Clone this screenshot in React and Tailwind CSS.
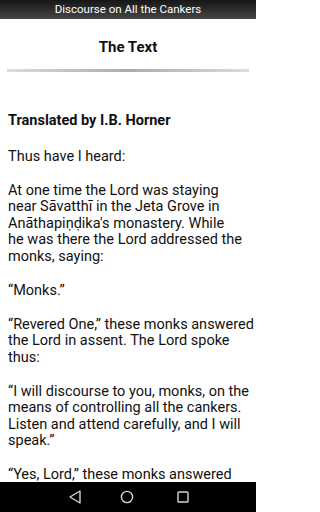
import React from "react";

// line breaks follow the reference screenshot
const paragraphs = [
  ["Thus have I heard:"],
  [
    "At one time the Lord was staying",
    "near Sāvatthī in the Jeta Grove in",
    "Anāthapiṇḍika's monastery. While",
    "he was there the Lord addressed the",
    "monks, saying:",
  ],
  ["“Monks.”"],
  [
    "“Revered One,” these monks answered",
    "the Lord in assent. The Lord spoke",
    "thus:",
  ],
  [
    "“I will discourse to you, monks, on the",
    "means of controlling all the cankers.",
    "Listen and attend carefully, and I will",
    "speak.”",
  ],
  ["“Yes, Lord,” these monks answered", "the Lord in assent. The Lord spoke", "thus:"],
];

function NavBar() {
  return (
    <div className="h-[30px] shrink-0 bg-black flex items-center pl-[65px]">
      {/* back */}
      <svg width="20" height="20" viewBox="0 0 20 20">
        <path d="M15 4 L5 10 L15 16 Z" fill="none" stroke="#d4d4d4" strokeWidth="1.4" strokeLinejoin="round" />
      </svg>
      {/* home */}
      <svg width="20" height="20" viewBox="0 0 20 20" className="ml-[32px]">
        <circle cx="10" cy="10" r="5.6" fill="none" stroke="#d4d4d4" strokeWidth="1.4" />
      </svg>
      {/* recents */}
      <svg width="20" height="20" viewBox="0 0 20 20" className="ml-[36px]">
        <rect x="5" y="5" width="10" height="10" rx="0.8" fill="none" stroke="#d4d4d4" strokeWidth="1.4" />
      </svg>
    </div>
  );
}

export default function App() {
  return (
    <div className="w-[256px] h-[512px] flex flex-col bg-white overflow-hidden font-['Roboto',sans-serif]">
      <div className="h-[19px] shrink-0 bg-gradient-to-b from-[#161616] to-[#474747] flex items-center justify-center">
        <span className="text-white text-[11.5px] leading-none">Discourse on All the Cankers</span>
      </div>

      <div className="flex-1 overflow-hidden">
        <h1 className="text-center font-bold text-[15px] leading-[18px] text-[#111] mt-[19px]">The Text</h1>
        <div className="mx-[7px] mt-[13px] h-[3px] bg-[linear-gradient(to_right,#dcdcdc,#ababab_50%,#dcdcdc)]" />

        <div className="pl-[8px] pt-[41px] text-[14.5px] leading-[16.5px] text-[#111] whitespace-nowrap">
          <p className="font-bold mb-[19px]">Translated by I.B. Horner</p>
          {paragraphs.map((lines, i) => (
            <p key={i} className="mb-[17.5px]">
              {lines.map((l, j) => (
                <React.Fragment key={j}>
                  {j > 0 && <br />}
                  {l}
                </React.Fragment>
              ))}
            </p>
          ))}
        </div>
      </div>

      <NavBar />
    </div>
  );
}
